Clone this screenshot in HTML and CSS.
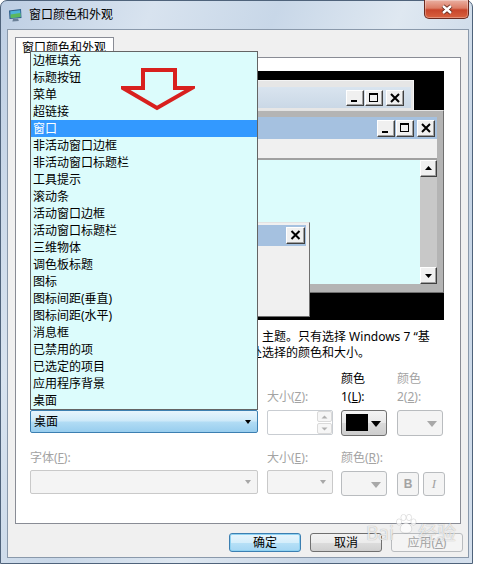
FILE: index.html
```html
<!DOCTYPE html>
<html>
<head>
	<meta charset="utf-8">
	<title>窗口颜色和外观</title>
	<link rel="stylesheet" href="styles.css">
</head>
<body>
<div class="window">
	<div class="titlebar">
		<svg class="appicon" width="15" height="15" viewBox="0 0 15 15">
			<path d="M1 2.5 L13 1 L13.5 10 L1.5 11 Z" fill="#2f5f8a"/>
			<path d="M2.3 3.3 L12.2 2.2 L12.6 9 L2.7 9.9 Z" fill="#4fb3d9"/>
			<path d="M2.5 6.5 L12.4 5 L12.6 9 L2.7 9.9 Z" fill="#5cb85c"/>
			<path d="M5 11 L10 10.6 L10.8 13 L4.4 13.6 Z" fill="#6a7f96"/>
		</svg>
		<span class="title">窗口颜色和外观</span>
		<div class="closebtn">
			<svg width="14" height="11" viewBox="0 0 14 11">
				<path d="M3 2 L11 9 M11 2 L3 9" stroke="#5b2216" stroke-width="4.2"/>
				<path d="M3 2 L11 9 M11 2 L3 9" stroke="#fff" stroke-width="2.4"/>
			</svg>
		</div>
	</div>
	<div class="client">
		<div class="tabs">
			<div class="tab">窗口颜色和外观</div>
		</div>
		<div class="panel">
			<div class="preview">
				<div class="pw inactive">
					<div class="cap">
						<span class="cb cb-min"><svg width="16" height="14" viewBox="0 0 16 14"><rect x="4" y="9" width="6" height="2"/></svg></span>
						<span class="cb cb-max"><svg width="16" height="14" viewBox="0 0 16 14"><path d="M3 2h9v9h-9z M4 4h7v6h-7z" fill-rule="evenodd"/></svg></span>
						<span class="cb cb-close"><svg width="16" height="14" viewBox="0 0 16 14"><path d="M4 3l8 8M12 3l-8 8" stroke="#000" stroke-width="2"/></svg></span>
					</div>
				</div>
				<div class="pw active">
					<div class="cap">
						<span class="cb cb-min"><svg width="16" height="15" viewBox="0 0 16 15"><rect x="4" y="10" width="6" height="2"/></svg></span>
						<span class="cb cb-max"><svg width="16" height="15" viewBox="0 0 16 15"><path d="M3 2h9v9h-9z M4 4h7v6h-7z" fill-rule="evenodd"/></svg></span>
						<span class="cb cb-close"><svg width="16" height="15" viewBox="0 0 16 15"><path d="M4 3l8 8M12 3l-8 8" stroke="#000" stroke-width="2"/></svg></span>
					</div>
					<div class="menubar"></div>
					<div class="wbody">
						<div class="wtext"></div>
						<div class="vscroll">
							<span class="sb"><svg width="15" height="15" viewBox="0 0 15 15"><path d="M4 9h7l-3.5-4z"/></svg></span>
							<span class="track"></span>
							<span class="sb"><svg width="15" height="15" viewBox="0 0 15 15"><path d="M4 6h7l-3.5 4z"/></svg></span>
						</div>
					</div>
				</div>
				<div class="pw msgbox">
					<div class="cap">
						<span class="cb cb-close"><svg width="17" height="15" viewBox="0 0 17 15"><path d="M4.5 3l8 8M12.5 3l-8 8" stroke="#000" stroke-width="2"/></svg></span>
					</div>
					<div class="mbody"></div>
				</div>
			</div>

			<div class="note">
				<div class="l1">主题。只有选择 Windows 7 “基</div>
				<div class="l2">处选择的颜色和大小。</div>
			</div>

			<div class="row labels">
				<div class="c1"></div>
				<div class="c2 lab off">大小(<u>Z</u>):</div>
				<div class="c3 lab">颜色<br>1(<u>L</u>):</div>
				<div class="c4 lab off">颜色<br>2(<u>2</u>):</div>
			</div>
			<div class="row boxes">
				<div class="combo focus"><span>桌面</span><i class="arr"></i></div>
				<div class="spin">
					<div class="spin-btns">
						<span><svg width="7" height="4" viewBox="0 0 7 4"><path d="M0.5 3.5h6l-3-3z"/></svg></span>
						<span><svg width="7" height="4" viewBox="0 0 7 4"><path d="M0.5 0.5h6l-3 3z"/></svg></span>
					</div>
				</div>
				<div class="colorbtn"><span class="swatch"></span><i class="bigarr"></i></div>
				<div class="colorbtn off"><i class="bigarr"></i></div>
			</div>

			<div class="row labels2">
				<div class="c1 lab off">字体(<u>F</u>):</div>
				<div class="c2 lab off">大小(<u>E</u>):</div>
				<div class="c3 lab off">颜色(<u>R</u>):</div>
			</div>
			<div class="row boxes2">
				<div class="combo off font"><i class="arr"></i></div>
				<div class="combo off size"><i class="arr"></i></div>
				<div class="colorbtn off small"><i class="bigarr"></i></div>
				<div class="fbtn bold">B</div>
				<div class="fbtn ital">I</div>
			</div>

			<!-- 展开的下拉列表 -->
			<ul class="droplist">
				<li>边框填充</li>
				<li>标题按钮</li>
				<li>菜单</li>
				<li>超链接</li>
				<li class="sel">窗口</li>
				<li>非活动窗口边框</li>
				<li>非活动窗口标题栏</li>
				<li>工具提示</li>
				<li>滚动条</li>
				<li>活动窗口边框</li>
				<li>活动窗口标题栏</li>
				<li>三维物体</li>
				<li>调色板标题</li>
				<li>图标</li>
				<li>图标间距(垂直)</li>
				<li>图标间距(水平)</li>
				<li>消息框</li>
				<li>已禁用的项</li>
				<li>已选定的项目</li>
				<li>应用程序背景</li>
				<li>桌面</li>
			</ul>

			<svg class="redarrow" width="74" height="44" viewBox="0 0 74 44">
				<path d="M22 3 H54 V21 H71 L36 41 L2 21 H22 Z" fill="none" stroke="#d8201e" stroke-width="4" stroke-linejoin="miter"/>
			</svg>
		</div>

		<div class="buttons">
			<div class="btn default">确定</div>
			<div class="btn">取消</div>
			<div class="btn off">应用(<u>A</u>)</div>
		</div>
	</div>

	<div class="watermark">
		<span>Bai</span>
		<svg width="22" height="20" viewBox="0 0 22 20">
			<ellipse cx="4" cy="8" rx="2.6" ry="3.2"/>
			<ellipse cx="8.5" cy="3.5" rx="2.6" ry="3.2"/>
			<ellipse cx="14" cy="3.5" rx="2.6" ry="3.2"/>
			<ellipse cx="18.5" cy="8" rx="2.6" ry="3.2"/>
			<path d="M11 9 C6 9 4 15 6 17.5 C8 19.5 14 19.5 16 17.5 C18 15 16 9 11 9 Z"/>
		</svg>
		<span>经验</span>
	</div>
</div>
</body>
</html>
```

FILE: styles.css
```css
body{
	margin:0;
	background:#fff;
	font-family:"Noto Sans","Noto Sans CJK SC",sans-serif;
	font-size:12px;
	color:#000;
}
.window{
	position:relative;
	box-sizing:border-box;
	width:473px;
	height:564px;
	padding:0 3px 5px 6px;
	border:1px solid #4f637b;
	border-radius:7px 7px 0 0;
	background:linear-gradient(112deg,#bdcee3 0%,#d8e3ef 22%,#c8d7e8 40%,#dfe8f1 58%,#c6d5e6 78%,#d5e0ed 100%);
	display:flex;
	flex-direction:column;
}
.titlebar{
	height:28px;
	display:flex;
	align-items:center;
}
.appicon{
	margin-left:1px;
}
.title{
	margin-left:6px;
	line-height:16px;
}
.closebtn{
	align-self:flex-start;
	margin-left:auto;
	margin-top:-1px;
	box-sizing:border-box;
	width:45px;
	height:19px;
	border:1px solid #6b2a1f;
	border-top:none;
	border-radius:0 0 5px 5px;
	background:linear-gradient(#eab0a2 0%,#dc7d66 45%,#c8452b 55%,#d8623f 100%);
	box-shadow:inset 0 0 0 1px rgba(255,255,255,.3);
	display:flex;
	align-items:center;
	justify-content:center;
}

.client{
	flex:1;
	background:#f0f0f0;
	border:1px solid #8a99ab;
	padding:7px 6px 0 7px;
	display:flex;
	flex-direction:column;
}
.tabs{
	display:flex;
}
.tab{
	position:relative;
	z-index:1;
	height:20px;
	line-height:19px;
	padding:0 7px 0 6px;
	background:#fff;
	border:1px solid #898c95;
	border-bottom:none;
	margin-bottom:-1px;
}
.panel{
	position:relative;
	box-sizing:border-box;
	width:446px;
	height:467px;
	background:#fff;
	border:1px solid #898c95;
}

/* 预览图 */
.preview{
	position:relative;
	overflow:hidden;
	width:414px;
	height:249px;
	margin:13px 0 0 14px;
	background:#000;
}
.pw{
	position:absolute;
	box-sizing:border-box;
	display:flex;
	flex-direction:column;
}
.pw .cap{
	display:flex;
	align-items:center;
	justify-content:flex-end;
}
.cb{
	box-sizing:border-box;
	width:18px;
	height:17px;
	background:#f0f0f0;
	border:1px solid;
	border-color:#fff #404040 #404040 #fff;
	box-shadow:inset -1px -1px #a0a0a0;
	display:flex;
}
.cb-min{
	margin-right:1px;
}
.cb-max{
	margin-right:3px;
}
.inactive{
	left:10px;
	top:9px;
	width:374px;
	height:70px;
	background:#e6e6e6;
	border:1px solid #f4f4f4;
	padding:6px 2px 0 3px;
}
.inactive .cap{
	height:21px;
	padding-right:7px;
	background:linear-gradient(#d9e4ef,#cad8e6);
}
.inactive .cb{
	height:16px;
}
.active{
	left:20px;
	top:39px;
	width:394px;
	height:183px;
	background:#b4b4b4;
	border:1px solid;
	border-color:#e3e3e3 #6f6f6f #6f6f6f #e3e3e3;
	padding:6px 6px 8px 5px;
}
.active .cap{
	height:22px;
	padding-right:2px;
	background:#a5c1e0;
}
.menubar{
	height:19px;
	background:#f0f0f0;
}
.wbody{
	flex:1;
	display:flex;
	background:#dcfcfc;
	border-top:2px solid #a0a0a0;
	border-left:2px solid #a0a0a0;
}
.wtext{
	flex:1;
}
.vscroll{
	width:17px;
	display:flex;
	flex-direction:column;
}
.sb{
	box-sizing:border-box;
	height:17px;
	background:#f0f0f0;
	border:1px solid;
	border-color:#fff #404040 #404040 #fff;
	box-shadow:inset -1px -1px #a0a0a0;
	display:flex;
}
.track{
	flex:1;
	background:#c8c8c8;
}
.msgbox{
	left:70px;
	top:151px;
	width:210px;
	height:95px;
	background:#f0f0f0;
	border:1px solid;
	border-color:#e3e3e3 #6f6f6f #6f6f6f #e3e3e3;
	padding:2px 3px 3px 3px;
}
.msgbox .cap{
	height:21px;
	padding-right:1px;
	background:#a5c1e0;
}
.msgbox .cb{
	width:19px;
}
.mbody{
	flex:1;
}

/* 说明文字 */
.note{
	margin-top:9px;
	line-height:16px;
	white-space:nowrap;
}
.l1{
	padding-left:246px;
}
.l2{
	padding-left:234px;
}

/* 控件 */
.row{
	display:flex;
	margin-left:14px;
	align-items:flex-start;
}
.labels{
	margin-top:9px;
	height:36px;
	align-items:flex-end;
}
.lab{
	line-height:18px;
}
.off{
	color:#a3a3a3;
}
.c1{
	width:237px;
}
.c2{
	width:74px;
}
.c3{
	width:56px;
}
.boxes{
	margin-top:4px;
}
.labels2{
	margin-top:13px;
}
.boxes2{
	margin-top:3px;
}
.combo{
	position:relative;
	box-sizing:border-box;
	width:228px;
	height:23px;
	border:1px solid #3c7fb1;
	border-radius:2px;
	padding-left:3px;
	line-height:21px;
	background:linear-gradient(#e6f4fc 0%,#cfeaf9 45%,#b0dbf4 55%,#98cdee 100%);
}
.combo.off{
	height:24px;
	border-color:#c9c9c9;
	background:#f4f4f4;
}
.arr{
	position:absolute;
	right:6px;
	top:9px;
	border-top:4px solid #000;
	border-left:3.5px solid transparent;
	border-right:3.5px solid transparent;
}
.combo.off .arr{
	border-top-color:#a8a8a8;
}
.combo.size{
	width:66px;
	margin-left:9px;
}
.spin{
	box-sizing:border-box;
	width:66px;
	height:25px;
	margin-left:9px;
	border:1px solid #c9cdd2;
	border-radius:2px;
	background:#fff;
	display:flex;
	justify-content:flex-end;
}
.spin-btns{
	width:15px;
	display:flex;
	flex-direction:column;
	gap:1px;
	padding:0 0 0 1px;
}
.spin-btns span{
	flex:1;
	border:1px solid #dadada;
	border-radius:2px;
	background:#f6f6f6;
	display:flex;
	align-items:center;
	justify-content:center;
	fill:#b0b0b0;
}
.colorbtn{
	position:relative;
	box-sizing:border-box;
	width:46px;
	height:26px;
	margin-left:8px;
	border:1px solid #707070;
	border-radius:3px;
	background:linear-gradient(#f4f4f4 0%,#e8e8e8 50%,#dadada 50%,#cdcdcd 100%);
}
.colorbtn.off{
	margin-left:10px;
	border-color:#b9bcbf;
	background:#f4f4f4;
}
.colorbtn.small{
	height:25px;
	margin-left:8px;
	margin-top:1px;
}
.swatch{
	position:absolute;
	left:4px;
	top:3px;
	width:22px;
	height:17px;
	background:#000;
}
.bigarr{
	position:absolute;
	right:5px;
	top:10px;
	border-top:6px solid #000;
	border-left:5px solid transparent;
	border-right:5px solid transparent;
}
.colorbtn.off .bigarr{
	border-top-color:#a8a8a8;
}
.fbtn{
	box-sizing:border-box;
	width:22px;
	height:24px;
	margin-top:2px;
	margin-left:10px;
	border:1px solid #b9bcbf;
	border-radius:3px;
	background:#f4f4f4;
	color:#a3a3a3;
	text-align:center;
	line-height:22px;
}
.bold{
	font-family:"Liberation Sans",sans-serif;
	font-weight:bold;
}
.ital{
	margin-left:4px;
	font-family:"Liberation Serif",serif;
	font-style:italic;
	font-size:13px;
}

/* 下拉列表 */
.droplist{
	position:absolute;
	z-index:5;
	left:14px;
	top:-7px;
	box-sizing:border-box;
	width:228px;
	margin:0;
	padding:0;
	list-style-type:none;
	border:1px solid #646464;
	background:#dcfcfc;
}
.droplist li{
	height:17px;
	line-height:17px;
	padding-left:2px;
}
.droplist li.sel{
	background:#3399ff;
	color:#fff;
}
.redarrow{
	position:absolute;
	z-index:6;
	left:105px;
	top:9px;
}

/* 底部按钮 */
.buttons{
	display:flex;
	justify-content:flex-end;
	gap:9px;
	margin-top:9px;
	margin-right:-1px;
}
.btn{
	box-sizing:border-box;
	width:72px;
	height:19px;
	line-height:17px;
	text-align:center;
	border:1px solid #707070;
	border-radius:3px;
	background:linear-gradient(#f2f2f2 0%,#ebebeb 50%,#dddddd 50%,#cfcfcf 100%);
}
.btn.default{
	border-color:#3c7fb1;
	background:linear-gradient(#e8f5fc 0%,#d5eefb 50%,#b8e1f7 50%,#a4d6f3 100%);
	box-shadow:inset 0 0 0 1px #8fd2f2;
}
.btn.off{
	border-color:#b9bcbf;
	background:#f4f4f4;
	color:#a3a3a3;
}

.watermark{
	position:absolute;
	left:365px;
	top:513px;
	display:flex;
	align-items:flex-end;
	font-size:19px;
	line-height:22px;
	color:rgba(255,255,255,.75);
	text-shadow:0 0 1px rgba(0,0,0,.35);
	fill:rgba(255,255,255,.75);
	stroke:rgba(0,0,0,.18);
	stroke-width:.6;
	pointer-events:none;
}
.watermark svg{
	margin:0 1px 10px;
}
```
